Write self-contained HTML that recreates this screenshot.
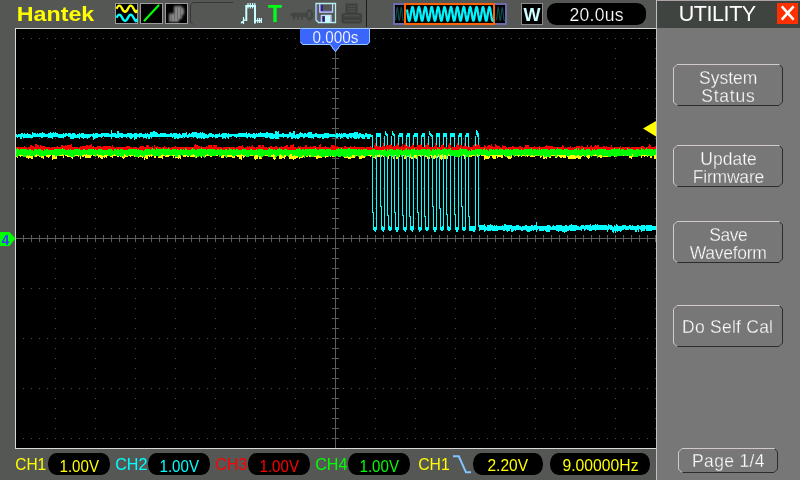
<!DOCTYPE html>
<html lang="en"><head><meta charset="utf-8"><title>Hantek UTILITY</title>
<style>
html,body{margin:0;padding:0;background:#555755;overflow:hidden}
body{width:800px;height:480px;position:relative}
svg{position:absolute;left:0;top:0;display:block;will-change:transform}
text{font-family:"Liberation Sans",sans-serif;}
.t{font-size:17.5px;fill:#fff;stroke:#777777;stroke-width:.3px;text-anchor:middle}
.c{font-size:16.6px;}
.v{font-size:16.8px}
</style></head><body>
<svg width="800" height="480" viewBox="0 0 800 480">
<g shape-rendering="crispEdges">
<rect x="15" y="28" width="642" height="421" fill="#d8d8d8"/>
<rect x="16" y="29" width="640" height="419" fill="#000"/>
<g stroke="#505050" stroke-width="1" stroke-dasharray="1 7">
<line x1="23" y1="38.5" x2="656" y2="38.5"/>
<line x1="23" y1="88.5" x2="656" y2="88.5"/>
<line x1="23" y1="138.5" x2="656" y2="138.5"/>
<line x1="23" y1="188.5" x2="656" y2="188.5"/>
<line x1="23" y1="288.5" x2="656" y2="288.5"/>
<line x1="23" y1="338.5" x2="656" y2="338.5"/>
<line x1="23" y1="388.5" x2="656" y2="388.5"/>
<line x1="23" y1="438.5" x2="656" y2="438.5"/>
</g>
<g stroke="#505050" stroke-width="1" stroke-dasharray="1 9">
<line x1="55.5" y1="38" x2="55.5" y2="439"/>
<line x1="95.5" y1="38" x2="95.5" y2="439"/>
<line x1="135.5" y1="38" x2="135.5" y2="439"/>
<line x1="175.5" y1="38" x2="175.5" y2="439"/>
<line x1="215.5" y1="38" x2="215.5" y2="439"/>
<line x1="255.5" y1="38" x2="255.5" y2="439"/>
<line x1="295.5" y1="38" x2="295.5" y2="439"/>
<line x1="375.5" y1="38" x2="375.5" y2="439"/>
<line x1="415.5" y1="38" x2="415.5" y2="439"/>
<line x1="455.5" y1="38" x2="455.5" y2="439"/>
<line x1="495.5" y1="38" x2="495.5" y2="439"/>
<line x1="535.5" y1="38" x2="535.5" y2="439"/>
<line x1="575.5" y1="38" x2="575.5" y2="439"/>
<line x1="615.5" y1="38" x2="615.5" y2="439"/>
<line x1="655.5" y1="38" x2="655.5" y2="439"/>
</g>
<g stroke="#5c5c5c" stroke-width="1">
<line x1="16" y1="238.5" x2="656" y2="238.5"/>
<line x1="335.5" y1="29" x2="335.5" y2="448"/>
</g>
<line x1="23" y1="238.5" x2="656" y2="238.5" stroke="#5c5c5c" stroke-width="7" stroke-dasharray="1 7"/>
<line x1="335.5" y1="48" x2="335.5" y2="448" stroke="#5c5c5c" stroke-width="7" stroke-dasharray="1 9"/>
<path d="M16.5 149V157M17.5 149V158M18.5 148V156M19.5 149V156M20.5 149V157M21.5 150V156M22.5 150V156M23.5 150V156M24.5 150V156M25.5 150V156M26.5 150V158M27.5 150V158M28.5 150V159M29.5 150V158M30.5 150V158M31.5 150V159M32.5 150V159M33.5 150V156M34.5 150V156M35.5 149V157M36.5 149V157M37.5 150V156M38.5 150V156M39.5 150V157M40.5 150V157M41.5 151V158M42.5 150V158M43.5 150V159M44.5 150V156M45.5 150V156M46.5 149V157M47.5 150V157M48.5 150V158M49.5 150V157M50.5 150V156M51.5 150V155M52.5 150V160M53.5 149V159M54.5 150V159M55.5 151V159M56.5 150V159M57.5 150V156M58.5 150V156M59.5 150V156M60.5 150V156M61.5 150V156M62.5 150V156M63.5 150V158M64.5 150V155M65.5 150V156M66.5 150V156M67.5 150V157M68.5 149V157M69.5 150V157M70.5 150V157M71.5 150V158M72.5 150V159M73.5 149V157M74.5 150V157M75.5 151V156M76.5 150V156M77.5 150V156M78.5 150V157M79.5 150V156M80.5 149V159M81.5 150V156M82.5 150V157M83.5 150V157M84.5 150V156M85.5 150V158M86.5 150V158M87.5 150V158M88.5 150V158M89.5 150V158M90.5 150V158M91.5 150V156M92.5 150V155M93.5 150V156M94.5 150V156M95.5 150V156M96.5 151V156M97.5 151V156M98.5 150V158M99.5 150V157M100.5 150V158M101.5 150V159M102.5 149V159M103.5 150V157M104.5 150V158M105.5 150V157M106.5 150V158M107.5 149V156M108.5 149V156M109.5 150V156M110.5 150V157M111.5 150V157M112.5 150V158M113.5 150V156M114.5 150V156M115.5 150V156M116.5 150V156M117.5 150V157M118.5 150V157M119.5 150V156M120.5 150V157M121.5 150V157M122.5 150V158M123.5 150V159M124.5 150V158M125.5 149V157M126.5 150V157M127.5 149V157M128.5 150V156M129.5 150V156M130.5 150V157M131.5 150V156M132.5 150V156M133.5 150V156M134.5 151V157M135.5 150V157M136.5 149V157M137.5 150V157M138.5 150V158M139.5 150V157M140.5 150V157M141.5 150V157M142.5 150V158M143.5 149V156M144.5 151V160M145.5 150V158M146.5 150V159M147.5 150V159M148.5 150V156M149.5 151V157M150.5 150V156M151.5 149V157M152.5 150V156M153.5 150V156M154.5 150V158M155.5 150V158M156.5 151V156M157.5 149V156M158.5 150V158M159.5 151V158M160.5 150V158M161.5 151V158M162.5 150V159M163.5 150V156M164.5 150V156M165.5 149V157M166.5 148V157M167.5 149V157M168.5 149V157M169.5 150V156M170.5 150V156M171.5 150V156M172.5 150V156M173.5 150V158M174.5 149V156M175.5 150V158M176.5 150V158M177.5 150V158M178.5 150V159M179.5 150V158M180.5 150V159M181.5 150V155M182.5 150V156M183.5 150V157M184.5 150V157M185.5 150V157M186.5 151V156M187.5 150V157M188.5 150V157M189.5 150V156M190.5 150V157M191.5 150V157M192.5 150V157M193.5 150V157M194.5 150V157M195.5 150V157M196.5 150V158M197.5 150V156M198.5 150V156M199.5 150V156M200.5 150V156M201.5 151V158M202.5 149V156M203.5 149V156M204.5 150V156M205.5 150V157M206.5 149V156M207.5 148V156M208.5 150V156M209.5 150V156M210.5 150V157M211.5 150V157M212.5 151V156M213.5 150V156M214.5 148V156M215.5 149V156M216.5 151V156M217.5 150V156M218.5 150V155M219.5 151V156M220.5 150V156M221.5 150V158M222.5 150V158M223.5 150V158M224.5 149V156M225.5 149V157M226.5 149V157M227.5 150V157M228.5 150V157M229.5 150V157M230.5 150V157M231.5 151V157M232.5 150V158M233.5 150V158M234.5 150V158M235.5 149V156M236.5 149V156M237.5 150V157M238.5 150V157M239.5 150V159M240.5 150V159M241.5 150V160M242.5 149V156M243.5 150V158M244.5 149V157M245.5 149V156M246.5 150V156M247.5 150V156M248.5 151V156M249.5 150V156M250.5 150V156M251.5 149V156M252.5 150V156M253.5 150V155M254.5 150V159M255.5 150V160M256.5 150V159M257.5 151V159M258.5 151V156M259.5 150V159M260.5 150V159M261.5 150V159M262.5 149V157M263.5 150V156M264.5 150V156M265.5 150V156M266.5 150V156M267.5 150V156M268.5 150V156M269.5 151V156M270.5 150V156M271.5 150V157M272.5 150V157M273.5 151V159M274.5 150V160M275.5 150V159M276.5 150V156M277.5 150V156M278.5 150V156M279.5 150V159M280.5 151V159M281.5 150V159M282.5 150V158M283.5 150V158M284.5 151V159M285.5 150V157M286.5 150V156M287.5 150V156M288.5 150V156M289.5 150V159M290.5 150V159M291.5 150V159M292.5 149V159M293.5 150V160M294.5 150V159M295.5 149V159M296.5 150V158M297.5 149V158M298.5 150V157M299.5 150V159M300.5 150V158M301.5 150V158M302.5 150V158M303.5 149V157M304.5 149V157M305.5 150V156M306.5 150V157M307.5 150V157M308.5 150V156M309.5 150V157M310.5 151V157M311.5 150V157M312.5 150V157M313.5 149V157M314.5 150V157M315.5 150V157M316.5 150V159M317.5 150V159M318.5 150V158M319.5 150V158M320.5 150V158M321.5 150V158M322.5 150V155M323.5 149V156M324.5 149V155M325.5 150V158M326.5 150V157M327.5 150V157M328.5 150V157M329.5 150V156M330.5 150V157M331.5 150V156M332.5 150V157M333.5 150V157M334.5 151V157M335.5 150V157M336.5 149V156M337.5 150V156M338.5 150V156M339.5 150V156M340.5 149V157M341.5 150V156M342.5 150V156M343.5 149V156M344.5 150V158M345.5 150V158M346.5 149V158M347.5 150V158M348.5 150V159M349.5 150V159M350.5 150V159M351.5 150V158M352.5 150V158M353.5 150V158M354.5 150V158M355.5 150V156M356.5 150V156M357.5 150V156M358.5 150V156M359.5 151V159M360.5 151V159M361.5 150V159M362.5 150V158M363.5 150V158M364.5 150V158M365.5 149V156M366.5 150V156M367.5 150V156M368.5 150V156M369.5 150V156M370.5 150V157M371.5 150V156M372.5 150V159M373.5 150V158M374.5 150V158M375.5 150V159M376.5 149V158M377.5 150V157M378.5 150V157M379.5 150V157M380.5 150V157M381.5 150V157M382.5 150V156M383.5 150V157M384.5 151V156M385.5 150V156M386.5 150V156M387.5 150V156M388.5 150V159M389.5 150V156M390.5 150V156M391.5 150V156M392.5 150V157M393.5 150V159M394.5 150V159M395.5 150V156M396.5 151V159M397.5 150V159M398.5 150V157M399.5 150V157M400.5 150V155M401.5 150V156M402.5 150V156M403.5 150V156M404.5 150V159M405.5 150V159M406.5 150V159M407.5 150V157M408.5 151V157M409.5 150V158M410.5 150V158M411.5 150V159M412.5 151V159M413.5 149V159M414.5 150V158M415.5 151V158M416.5 149V159M417.5 149V159M418.5 150V156M419.5 150V156M420.5 150V157M421.5 150V157M422.5 149V156M423.5 150V156M424.5 149V157M425.5 149V157M426.5 149V157M427.5 150V159M428.5 150V159M429.5 150V159M430.5 150V156M431.5 150V158M432.5 150V158M433.5 148V159M434.5 149V159M435.5 150V158M436.5 150V158M437.5 150V158M438.5 149V157M439.5 149V158M440.5 150V159M441.5 150V160M442.5 150V159M443.5 150V159M444.5 149V159M445.5 149V159M446.5 149V159M447.5 149V159M448.5 150V156M449.5 149V156M450.5 150V156M451.5 150V156M452.5 150V156M453.5 150V156M454.5 150V156M455.5 150V156M456.5 150V156M457.5 150V156M458.5 150V157M459.5 151V157M460.5 150V155M461.5 150V156M462.5 150V156M463.5 150V156M464.5 150V159M465.5 150V159M466.5 150V157M467.5 150V157M468.5 150V156M469.5 150V157M470.5 150V157M471.5 150V157M472.5 150V156M473.5 150V156M474.5 150V156M475.5 150V156M476.5 149V156M477.5 150V157M478.5 150V156M479.5 150V156M480.5 150V155M481.5 150V156M482.5 150V156M483.5 150V156M484.5 150V160M485.5 150V159M486.5 150V159M487.5 150V159M488.5 150V159M489.5 151V158M490.5 150V156M491.5 150V156M492.5 151V158M493.5 150V159M494.5 150V159M495.5 150V159M496.5 150V156M497.5 150V158M498.5 150V157M499.5 150V157M500.5 150V157M501.5 151V158M502.5 149V158M503.5 150V155M504.5 150V156M505.5 150V156M506.5 150V156M507.5 150V158M508.5 150V159M509.5 150V159M510.5 151V159M511.5 150V158M512.5 150V155M513.5 150V156M514.5 150V156M515.5 150V156M516.5 149V156M517.5 150V156M518.5 151V157M519.5 150V156M520.5 150V156M521.5 150V157M522.5 150V156M523.5 150V156M524.5 150V156M525.5 151V156M526.5 150V156M527.5 149V157M528.5 150V156M529.5 150V156M530.5 150V157M531.5 150V157M532.5 150V157M533.5 150V157M534.5 150V157M535.5 149V156M536.5 149V156M537.5 149V156M538.5 149V156M539.5 150V156M540.5 150V158M541.5 150V157M542.5 150V156M543.5 149V159M544.5 149V159M545.5 149V158M546.5 149V159M547.5 150V157M548.5 151V156M549.5 150V158M550.5 150V158M551.5 150V156M552.5 150V156M553.5 150V156M554.5 150V156M555.5 150V158M556.5 150V158M557.5 150V157M558.5 150V156M559.5 150V157M560.5 150V158M561.5 150V158M562.5 150V157M563.5 150V158M564.5 150V158M565.5 150V158M566.5 150V156M567.5 150V157M568.5 151V159M569.5 150V159M570.5 150V159M571.5 150V159M572.5 150V159M573.5 150V159M574.5 150V159M575.5 150V159M576.5 150V158M577.5 150V158M578.5 149V159M579.5 150V159M580.5 151V159M581.5 150V157M582.5 150V156M583.5 150V156M584.5 150V156M585.5 150V156M586.5 150V157M587.5 150V158M588.5 150V159M589.5 150V158M590.5 150V156M591.5 149V156M592.5 150V155M593.5 150V156M594.5 150V156M595.5 150V156M596.5 150V156M597.5 150V157M598.5 149V157M599.5 150V157M600.5 150V158M601.5 149V158M602.5 149V155M603.5 150V157M604.5 150V157M605.5 150V157M606.5 150V157M607.5 150V157M608.5 150V157M609.5 150V156M610.5 150V156M611.5 150V156M612.5 150V156M613.5 150V156M614.5 150V157M615.5 150V157M616.5 150V157M617.5 150V156M618.5 150V156M619.5 150V156M620.5 150V156M621.5 150V156M622.5 150V156M623.5 150V156M624.5 150V156M625.5 150V156M626.5 150V156M627.5 149V156M628.5 150V156M629.5 149V158M630.5 149V158M631.5 150V159M632.5 151V157M633.5 150V156M634.5 150V157M635.5 150V156M636.5 151V156M637.5 150V156M638.5 150V156M639.5 149V156M640.5 150V156M641.5 150V158M642.5 150V156M643.5 150V156M644.5 150V157M645.5 150V156M646.5 150V156M647.5 150V157M648.5 150V156M649.5 150V156M650.5 150V158M651.5 150V158M652.5 150V156M653.5 150V156M654.5 150V159M655.5 150V159" stroke="#ffff00" stroke-width="1" fill="none"/>
<path d="M16.5 134V137M17.5 135V138M18.5 134V137M19.5 134V137M20.5 134V139M21.5 133V139M22.5 133V137M23.5 134V138M24.5 133V138M25.5 134V138M26.5 134V138M27.5 133V138M28.5 134V138M29.5 134V138M30.5 134V138M31.5 135V138M32.5 132V138M33.5 133V137M34.5 133V137M35.5 133V137M36.5 134V137M37.5 133V137M38.5 134V137M39.5 133V137M40.5 133V137M41.5 133V138M42.5 132V138M43.5 133V137M44.5 133V137M45.5 134V137M46.5 134V137M47.5 134V137M48.5 133V138M49.5 133V138M50.5 132V138M51.5 133V138M52.5 133V139M53.5 132V137M54.5 133V137M55.5 132V137M56.5 133V137M57.5 133V137M58.5 134V138M59.5 134V138M60.5 134V138M61.5 134V138M62.5 134V138M63.5 133V138M64.5 134V137M65.5 133V137M66.5 133V136M67.5 134V136M68.5 133V137M69.5 133V137M70.5 133V139M71.5 134V139M72.5 133V139M73.5 133V139M74.5 133V138M75.5 134V138M76.5 135V138M77.5 134V138M78.5 134V138M79.5 133V139M80.5 134V137M81.5 133V138M82.5 133V138M83.5 133V139M84.5 134V138M85.5 134V138M86.5 134V138M87.5 134V139M88.5 134V138M89.5 134V138M90.5 134V137M91.5 134V136M92.5 134V137M93.5 133V140M94.5 134V139M95.5 133V138M96.5 133V138M97.5 133V138M98.5 134V137M99.5 134V137M100.5 134V137M101.5 133V138M102.5 133V137M103.5 133V136M104.5 133V137M105.5 133V137M106.5 133V137M107.5 133V137M108.5 133V137M109.5 134V137M110.5 134V137M111.5 130V139M112.5 133V137M113.5 133V137M114.5 133V137M115.5 133V138M116.5 134V138M117.5 131V138M118.5 131V138M119.5 133V137M120.5 133V137M121.5 133V138M122.5 133V138M123.5 134V137M124.5 134V137M125.5 134V137M126.5 134V138M127.5 133V137M128.5 133V137M129.5 133V138M130.5 133V139M131.5 133V139M132.5 134V138M133.5 134V137M134.5 133V140M135.5 133V139M136.5 133V139M137.5 134V137M138.5 134V137M139.5 133V138M140.5 133V137M141.5 133V137M142.5 134V137M143.5 134V138M144.5 134V138M145.5 133V138M146.5 134V139M147.5 133V137M148.5 134V139M149.5 134V139M150.5 132V137M151.5 132V138M152.5 132V137M153.5 131V137M154.5 131V137M155.5 132V137M156.5 132V137M157.5 133V137M158.5 134V137M159.5 134V137M160.5 133V137M161.5 133V137M162.5 133V137M163.5 133V137M164.5 133V137M165.5 133V137M166.5 134V137M167.5 134V137M168.5 134V137M169.5 134V137M170.5 133V137M171.5 133V137M172.5 134V138M173.5 133V137M174.5 133V139M175.5 133V139M176.5 133V138M177.5 134V139M178.5 134V139M179.5 133V138M180.5 134V138M181.5 135V138M182.5 133V138M183.5 133V137M184.5 133V138M185.5 133V137M186.5 132V137M187.5 135V138M188.5 134V138M189.5 133V137M190.5 134V137M191.5 133V137M192.5 132V137M193.5 132V138M194.5 132V137M195.5 132V137M196.5 132V138M197.5 133V139M198.5 133V138M199.5 133V138M200.5 132V138M201.5 133V139M202.5 132V138M203.5 133V139M204.5 133V139M205.5 134V138M206.5 134V138M207.5 135V138M208.5 134V138M209.5 133V137M210.5 133V137M211.5 133V137M212.5 134V138M213.5 134V137M214.5 135V137M215.5 134V138M216.5 134V138M217.5 134V138M218.5 134V137M219.5 133V137M220.5 135V137M221.5 134V137M222.5 133V139M223.5 133V138M224.5 133V138M225.5 133V139M226.5 133V137M227.5 134V138M228.5 133V139M229.5 134V137M230.5 134V137M231.5 134V137M232.5 134V136M233.5 134V136M234.5 134V137M235.5 134V137M236.5 134V138M237.5 134V137M238.5 133V137M239.5 133V137M240.5 133V137M241.5 133V137M242.5 133V137M243.5 133V137M244.5 133V137M245.5 133V137M246.5 132V138M247.5 134V138M248.5 133V137M249.5 133V137M250.5 134V138M251.5 134V137M252.5 134V138M253.5 133V138M254.5 133V139M255.5 134V138M256.5 133V137M257.5 134V137M258.5 133V137M259.5 133V137M260.5 132V137M261.5 133V137M262.5 133V137M263.5 133V137M264.5 133V137M265.5 133V138M266.5 132V138M267.5 132V138M268.5 133V137M269.5 133V138M270.5 133V139M271.5 133V139M272.5 133V139M273.5 134V139M274.5 134V138M275.5 131V139M276.5 131V139M277.5 132V139M278.5 131V139M279.5 134V137M280.5 134V137M281.5 134V137M282.5 133V137M283.5 133V138M284.5 134V137M285.5 134V137M286.5 134V137M287.5 134V138M288.5 134V138M289.5 132V137M290.5 132V137M291.5 133V139M292.5 133V139M293.5 131V138M294.5 131V138M295.5 135V139M296.5 134V138M297.5 134V139M298.5 134V139M299.5 133V138M300.5 132V137M301.5 133V137M302.5 133V137M303.5 134V138M304.5 133V138M305.5 133V137M306.5 134V137M307.5 133V137M308.5 132V138M309.5 132V138M310.5 132V138M311.5 132V138M312.5 134V138M313.5 134V139M314.5 134V137M315.5 133V137M316.5 133V137M317.5 134V138M318.5 134V138M319.5 134V138M320.5 134V138M321.5 134V137M322.5 134V139M323.5 134V139M324.5 133V138M325.5 133V138M326.5 133V138M327.5 133V138M328.5 133V138M329.5 134V137M330.5 134V137M331.5 134V137M332.5 134V137M333.5 134V137M334.5 134V137M335.5 135V137M336.5 133V138M337.5 133V138M338.5 134V137M339.5 133V137M340.5 134V139M341.5 133V138M342.5 134V138M343.5 133V137M344.5 133V137M345.5 133V137M346.5 134V138M347.5 134V139M348.5 134V139M349.5 133V137M350.5 133V138M351.5 133V138M352.5 133V137M353.5 133V138M354.5 132V139M355.5 132V139M356.5 132V139M357.5 132V138M358.5 134V139M359.5 133V138M360.5 133V137M361.5 134V138M362.5 134V139M363.5 134V139M364.5 135V139M365.5 133V137M366.5 133V137M367.5 134V139M368.5 134V139M369.5 134V139M370.5 134V137M371.5 135V137M372.5 135V138M372.5 135V213M373.5 212V228M373.5 227V230M374.5 227V230M375.5 227V230M376.5 227V230M374.5 229V231M375.5 229V232M376.5 136V229M376.5 133V137M377.5 133V137M378.5 133V137M379.5 133V137M380.5 133V137M380.5 135V207M381.5 206V228M381.5 227V230M382.5 226V230M383.5 227V230M384.5 227V230M382.5 229V231M383.5 229V232M384.5 136V229M384.5 136V139M385.5 131V135M386.5 133V136M387.5 134V137M387.5 135V216M388.5 215V228M388.5 226V230M389.5 226V230M390.5 227V230M391.5 227V230M389.5 229V231M390.5 229V231M391.5 136V229M391.5 136V139M392.5 131V135M393.5 133V136M394.5 134V137M394.5 135V213M395.5 212V228M395.5 227V230M396.5 227V230M397.5 227V230M398.5 227V230M396.5 229V232M397.5 229V232M398.5 136V229M398.5 135V138M399.5 133V137M400.5 133V137M401.5 133V137M402.5 133V138M402.5 135V216M403.5 215V228M403.5 226V230M404.5 227V230M405.5 227V230M406.5 226V230M404.5 229V231M405.5 229V232M406.5 136V229M406.5 135V138M407.5 133V137M408.5 133V137M409.5 133V138M409.5 135V217M410.5 216V228M410.5 227V230M411.5 226V230M412.5 226V230M413.5 227V230M411.5 229V231M412.5 229V232M413.5 136V229M413.5 135V138M414.5 133V137M415.5 133V137M416.5 133V137M417.5 133V138M417.5 135V213M418.5 212V228M418.5 227V230M419.5 227V230M420.5 227V230M421.5 227V230M419.5 229V232M420.5 229V231M421.5 136V229M421.5 135V138M422.5 133V137M423.5 133V137M424.5 133V138M424.5 135V217M425.5 216V228M425.5 227V230M426.5 227V230M427.5 227V230M428.5 227V230M426.5 229V231M427.5 229V231M428.5 136V229M428.5 136V139M429.5 131V135M430.5 133V136M431.5 134V137M432.5 135V138M432.5 135V207M433.5 206V228M433.5 226V230M434.5 227V230M435.5 227V230M436.5 227V230M434.5 229V232M435.5 229V232M436.5 136V229M436.5 133V137M437.5 133V137M438.5 133V137M439.5 133V137M439.5 135V209M440.5 208V228M440.5 226V230M441.5 227V230M442.5 226V230M443.5 227V230M441.5 229V231M442.5 229V231M443.5 136V229M443.5 133V137M444.5 133V137M445.5 133V137M446.5 133V137M446.5 135V215M447.5 214V228M447.5 227V230M448.5 226V230M449.5 227V230M450.5 226V230M448.5 229V231M449.5 229V231M450.5 136V229M450.5 133V137M451.5 133V137M452.5 133V137M453.5 133V137M454.5 133V137M454.5 135V215M455.5 214V228M455.5 227V230M456.5 227V230M457.5 227V230M458.5 226V230M456.5 229V232M457.5 229V232M458.5 136V229M458.5 135V138M459.5 133V137M460.5 133V137M461.5 133V138M461.5 135V207M462.5 206V228M462.5 227V230M463.5 227V230M464.5 227V230M465.5 226V230M463.5 229V231M464.5 229V231M465.5 136V229M465.5 135V138M466.5 133V137M467.5 133V137M468.5 133V138M468.5 135V217M469.5 216V228M469.5 227V230M470.5 226V230M471.5 227V230M472.5 227V230M473.5 226V230M474.5 227V230M475.5 227V230M470.5 229V231M471.5 229V231M472.5 229V231M473.5 229V232M474.5 229V232M469.5 226V231M470.5 226V231M471.5 226V231M472.5 226V231M473.5 226V231M474.5 226V231M475.5 136V229M476.5 130V135M477.5 131V137M478.5 133V227M479.5 225V231M480.5 225V230M481.5 225V230M482.5 225V230M483.5 225V230M484.5 224V232M485.5 226V231M486.5 227V230M487.5 225V231M488.5 225V231M489.5 225V231M490.5 224V231M491.5 225V230M492.5 225V231M493.5 226V231M494.5 225V231M495.5 226V231M496.5 225V231M497.5 226V231M498.5 226V230M499.5 226V230M500.5 226V230M501.5 226V230M502.5 225V230M503.5 226V231M504.5 224V231M505.5 224V230M506.5 225V231M507.5 225V232M508.5 225V231M509.5 225V231M510.5 225V229M511.5 225V232M512.5 226V232M513.5 226V231M514.5 226V230M515.5 226V231M516.5 225V230M517.5 225V230M518.5 225V230M519.5 226V230M520.5 226V230M521.5 227V231M522.5 226V231M523.5 226V230M524.5 226V230M525.5 225V230M526.5 225V231M527.5 226V232M528.5 226V232M529.5 226V232M530.5 226V231M531.5 225V231M532.5 225V230M533.5 226V231M534.5 225V230M535.5 225V230M536.5 222V232M537.5 226V230M538.5 226V229M539.5 226V231M540.5 226V231M541.5 226V231M542.5 226V231M543.5 226V231M544.5 226V230M545.5 226V231M546.5 226V232M547.5 225V232M548.5 225V232M549.5 225V232M550.5 226V230M551.5 227V230M552.5 226V230M553.5 225V230M554.5 226V230M555.5 226V230M556.5 225V231M557.5 225V231M558.5 225V232M559.5 225V231M560.5 225V231M561.5 225V231M562.5 226V232M563.5 226V232M564.5 226V233M565.5 225V232M566.5 225V232M567.5 226V231M568.5 226V231M569.5 225V230M570.5 225V231M571.5 224V231M572.5 225V231M573.5 225V231M574.5 225V231M575.5 225V231M576.5 225V230M577.5 226V230M578.5 226V230M579.5 227V230M580.5 226V230M581.5 225V231M582.5 225V229M583.5 225V229M584.5 226V231M585.5 225V230M586.5 225V229M587.5 225V230M588.5 225V230M589.5 225V231M590.5 224V231M591.5 226V231M592.5 225V230M593.5 225V230M594.5 225V230M595.5 224V231M596.5 225V230M597.5 224V230M598.5 225V230M599.5 225V230M600.5 225V230M601.5 225V230M602.5 225V230M603.5 225V230M604.5 225V230M605.5 225V230M606.5 225V230M607.5 226V232M608.5 224V230M609.5 225V229M610.5 225V230M611.5 225V230M612.5 226V232M613.5 227V233M614.5 225V231M615.5 226V233M616.5 224V231M617.5 225V232M618.5 226V231M619.5 226V231M620.5 226V232M621.5 226V231M622.5 225V230M623.5 225V230M624.5 225V229M625.5 225V230M626.5 226V230M627.5 226V230M628.5 226V230M629.5 225V229M630.5 225V230M631.5 226V230M632.5 225V230M633.5 226V230M634.5 226V230M635.5 226V232M636.5 226V232M637.5 225V230M638.5 225V232M639.5 226V229M640.5 226V230M641.5 225V232M642.5 225V231M643.5 225V231M644.5 225V231M645.5 226V229M646.5 225V231M647.5 225V231M648.5 225V231M649.5 225V231M650.5 225V231M651.5 225V231M652.5 226V230M653.5 226V230M654.5 226V230M655.5 226V230" stroke="#00ffff" stroke-width="1" fill="none"/>
<path d="M16.5 147V151M17.5 147V150M18.5 147V151M19.5 147V151M20.5 147V151M21.5 147V151M22.5 147V151M23.5 147V151M24.5 146V151M25.5 147V151M26.5 147V151M27.5 148V151M28.5 147V151M29.5 147V151M30.5 145V152M31.5 145V152M32.5 146V151M33.5 146V151M34.5 147V151M35.5 144V151M36.5 144V151M37.5 145V151M38.5 145V151M39.5 147V151M40.5 145V151M41.5 146V152M42.5 146V151M43.5 146V151M44.5 146V151M45.5 147V151M46.5 147V151M47.5 147V151M48.5 147V151M49.5 147V151M50.5 148V151M51.5 147V151M52.5 147V151M53.5 147V150M54.5 147V151M55.5 147V151M56.5 147V151M57.5 146V151M58.5 147V151M59.5 147V151M60.5 147V151M61.5 145V151M62.5 145V151M63.5 146V151M64.5 146V151M65.5 145V152M66.5 146V151M67.5 145V151M68.5 145V150M69.5 145V153M70.5 145V152M71.5 144V151M72.5 147V152M73.5 147V151M74.5 147V151M75.5 147V151M76.5 147V151M77.5 147V152M78.5 148V152M79.5 147V152M80.5 146V151M81.5 147V151M82.5 146V151M83.5 146V151M84.5 146V151M85.5 146V151M86.5 145V151M87.5 145V151M88.5 146V151M89.5 145V151M90.5 145V151M91.5 144V150M92.5 147V151M93.5 146V152M94.5 147V151M95.5 147V151M96.5 147V152M97.5 146V151M98.5 146V151M99.5 146V151M100.5 146V151M101.5 147V151M102.5 147V150M103.5 146V151M104.5 146V151M105.5 146V150M106.5 146V151M107.5 146V151M108.5 146V151M109.5 146V151M110.5 146V151M111.5 147V151M112.5 145V151M113.5 147V151M114.5 147V151M115.5 148V151M116.5 147V151M117.5 147V152M118.5 147V151M119.5 147V151M120.5 147V151M121.5 147V152M122.5 147V150M123.5 147V151M124.5 147V151M125.5 147V151M126.5 146V151M127.5 146V151M128.5 146V150M129.5 146V150M130.5 147V151M131.5 147V151M132.5 148V151M133.5 147V152M134.5 147V151M135.5 147V152M136.5 147V152M137.5 148V152M138.5 148V152M139.5 147V151M140.5 146V151M141.5 146V151M142.5 146V151M143.5 146V151M144.5 147V150M145.5 147V151M146.5 145V150M147.5 145V150M148.5 145V151M149.5 147V151M150.5 147V151M151.5 147V151M152.5 146V151M153.5 148V152M154.5 145V151M155.5 147V151M156.5 147V151M157.5 146V150M158.5 147V151M159.5 147V151M160.5 147V152M161.5 148V152M162.5 147V151M163.5 147V151M164.5 146V152M165.5 147V152M166.5 147V151M167.5 148V151M168.5 147V150M169.5 147V151M170.5 148V151M171.5 147V151M172.5 147V151M173.5 147V152M174.5 147V151M175.5 146V152M176.5 147V151M177.5 147V151M178.5 147V151M179.5 147V151M180.5 147V151M181.5 147V151M182.5 147V151M183.5 147V151M184.5 147V151M185.5 147V151M186.5 147V151M187.5 147V151M188.5 147V152M189.5 147V151M190.5 147V151M191.5 147V151M192.5 147V151M193.5 147V152M194.5 145V151M195.5 144V151M196.5 145V152M197.5 145V152M198.5 146V151M199.5 146V151M200.5 147V151M201.5 146V151M202.5 147V151M203.5 147V151M204.5 147V151M205.5 147V151M206.5 146V151M207.5 147V151M208.5 145V151M209.5 145V151M210.5 145V151M211.5 145V152M212.5 147V151M213.5 145V151M214.5 145V152M215.5 145V151M216.5 145V151M217.5 147V152M218.5 147V151M219.5 147V150M220.5 147V151M221.5 147V152M222.5 148V151M223.5 147V151M224.5 147V151M225.5 147V151M226.5 147V151M227.5 147V151M228.5 147V151M229.5 147V151M230.5 147V151M231.5 147V151M232.5 147V151M233.5 147V151M234.5 147V151M235.5 148V151M236.5 147V151M237.5 147V151M238.5 146V150M239.5 146V151M240.5 146V151M241.5 146V151M242.5 145V151M243.5 147V151M244.5 148V151M245.5 147V151M246.5 147V150M247.5 146V152M248.5 147V152M249.5 146V151M250.5 147V151M251.5 146V150M252.5 145V151M253.5 147V151M254.5 147V152M255.5 148V152M256.5 147V151M257.5 147V151M258.5 145V151M259.5 145V151M260.5 145V151M261.5 147V151M262.5 145V151M263.5 145V151M264.5 147V151M265.5 147V151M266.5 147V151M267.5 148V151M268.5 147V151M269.5 147V151M270.5 146V151M271.5 146V151M272.5 147V151M273.5 147V151M274.5 147V151M275.5 146V151M276.5 146V151M277.5 147V151M278.5 148V151M279.5 147V151M280.5 147V151M281.5 146V151M282.5 147V151M283.5 147V151M284.5 146V151M285.5 146V151M286.5 145V152M287.5 145V151M288.5 147V152M289.5 147V151M290.5 145V152M291.5 145V152M292.5 145V151M293.5 144V151M294.5 147V152M295.5 147V151M296.5 148V151M297.5 147V151M298.5 146V151M299.5 147V151M300.5 146V152M301.5 147V150M302.5 147V151M303.5 147V151M304.5 147V150M305.5 145V151M306.5 145V151M307.5 147V151M308.5 147V151M309.5 147V151M310.5 146V151M311.5 147V151M312.5 147V151M313.5 146V152M314.5 146V151M315.5 146V151M316.5 147V151M317.5 147V152M318.5 147V152M319.5 145V152M320.5 144V152M321.5 147V151M322.5 147V151M323.5 147V150M324.5 147V151M325.5 146V151M326.5 147V151M327.5 147V152M328.5 147V151M329.5 148V151M330.5 147V151M331.5 145V151M332.5 145V151M333.5 145V151M334.5 146V150M335.5 145V151M336.5 147V151M337.5 146V151M338.5 147V151M339.5 147V151M340.5 147V151M341.5 147V151M342.5 147V151M343.5 148V151M344.5 146V151M345.5 146V151M346.5 147V151M347.5 147V151M348.5 147V151M349.5 147V151M350.5 146V151M351.5 147V151M352.5 147V152M353.5 147V151M354.5 146V151M355.5 147V151M356.5 147V151M357.5 147V151M358.5 147V152M359.5 147V152M360.5 147V151M361.5 147V151M362.5 147V152M363.5 147V151M364.5 147V151M365.5 148V151M366.5 147V151M367.5 147V151M368.5 147V151M369.5 147V150M370.5 146V151M371.5 147V151M372.5 148V152M373.5 148V151M374.5 145V150M375.5 143V151M376.5 146V151M377.5 146V151M378.5 147V151M379.5 146V152M380.5 147V151M381.5 147V152M382.5 146V150M383.5 143V152M384.5 146V151M385.5 147V151M386.5 145V151M387.5 145V151M388.5 146V151M389.5 145V151M390.5 144V151M391.5 145V151M392.5 147V151M393.5 146V151M394.5 146V151M395.5 146V151M396.5 145V151M397.5 143V151M398.5 145V151M399.5 147V151M400.5 147V151M401.5 146V151M402.5 144V151M403.5 147V152M404.5 145V150M405.5 143V151M406.5 146V151M407.5 145V152M408.5 146V152M409.5 147V151M410.5 147V152M411.5 146V151M412.5 143V151M413.5 145V151M414.5 147V152M415.5 147V151M416.5 147V151M417.5 145V151M418.5 145V152M419.5 145V151M420.5 144V151M421.5 145V151M422.5 147V152M423.5 147V151M424.5 147V151M425.5 145V150M426.5 145V151M427.5 143V151M428.5 145V151M429.5 147V151M430.5 147V151M431.5 147V151M432.5 147V151M433.5 147V151M434.5 146V151M435.5 143V151M436.5 145V152M437.5 147V152M438.5 147V151M439.5 147V152M440.5 147V152M441.5 145V152M442.5 144V152M443.5 145V151M444.5 147V151M445.5 147V151M446.5 147V151M447.5 148V151M448.5 145V151M449.5 143V151M450.5 145V150M451.5 148V151M452.5 147V152M453.5 147V151M454.5 147V151M455.5 147V151M456.5 145V152M457.5 143V152M458.5 145V152M459.5 147V151M460.5 145V151M461.5 145V151M462.5 147V151M463.5 146V151M464.5 143V151M465.5 146V151M466.5 146V151M467.5 147V151M468.5 147V151M469.5 146V151M470.5 147V151M471.5 147V151M472.5 147V151M473.5 145V151M474.5 144V152M475.5 146V152M476.5 144V151M477.5 145V151M478.5 145V151M479.5 145V151M480.5 147V151M481.5 147V152M482.5 147V151M483.5 147V151M484.5 145V151M485.5 146V152M486.5 147V151M487.5 146V151M488.5 145V151M489.5 145V151M490.5 146V151M491.5 144V151M492.5 146V151M493.5 147V152M494.5 147V152M495.5 144V151M496.5 145V151M497.5 146V152M498.5 146V151M499.5 146V151M500.5 147V151M501.5 148V151M502.5 145V151M503.5 146V151M504.5 146V151M505.5 146V152M506.5 147V151M507.5 148V151M508.5 147V151M509.5 147V153M510.5 147V151M511.5 147V151M512.5 146V151M513.5 146V152M514.5 147V151M515.5 147V151M516.5 147V150M517.5 147V151M518.5 147V151M519.5 146V151M520.5 146V151M521.5 147V150M522.5 147V151M523.5 148V151M524.5 147V151M525.5 145V151M526.5 145V151M527.5 145V151M528.5 145V151M529.5 147V152M530.5 147V151M531.5 147V152M532.5 147V151M533.5 147V151M534.5 146V151M535.5 147V151M536.5 147V151M537.5 147V151M538.5 147V151M539.5 146V151M540.5 147V151M541.5 147V151M542.5 147V151M543.5 147V151M544.5 147V151M545.5 146V151M546.5 145V151M547.5 146V151M548.5 146V150M549.5 146V151M550.5 146V151M551.5 146V150M552.5 146V150M553.5 147V151M554.5 147V151M555.5 147V151M556.5 147V151M557.5 147V150M558.5 147V151M559.5 147V151M560.5 147V151M561.5 147V151M562.5 145V151M563.5 146V151M564.5 148V151M565.5 147V151M566.5 148V150M567.5 147V151M568.5 147V151M569.5 147V151M570.5 146V151M571.5 148V151M572.5 147V151M573.5 148V151M574.5 147V152M575.5 147V151M576.5 146V151M577.5 146V151M578.5 146V151M579.5 146V151M580.5 147V151M581.5 146V151M582.5 146V151M583.5 147V152M584.5 147V151M585.5 147V152M586.5 147V150M587.5 145V151M588.5 147V151M589.5 147V151M590.5 146V151M591.5 145V151M592.5 147V152M593.5 147V151M594.5 146V151M595.5 145V152M596.5 146V151M597.5 145V151M598.5 145V151M599.5 147V152M600.5 147V152M601.5 147V151M602.5 147V151M603.5 146V150M604.5 146V151M605.5 147V151M606.5 146V150M607.5 147V151M608.5 147V150M609.5 147V151M610.5 147V151M611.5 145V150M612.5 147V151M613.5 148V151M614.5 147V151M615.5 147V151M616.5 147V151M617.5 147V151M618.5 147V152M619.5 147V152M620.5 146V151M621.5 148V151M622.5 147V151M623.5 147V151M624.5 147V151M625.5 147V151M626.5 147V150M627.5 147V151M628.5 147V151M629.5 147V151M630.5 148V151M631.5 147V151M632.5 147V151M633.5 147V151M634.5 147V151M635.5 147V151M636.5 147V151M637.5 147V151M638.5 147V151M639.5 147V151M640.5 147V151M641.5 146V152M642.5 146V151M643.5 146V151M644.5 147V152M645.5 148V152M646.5 147V152M647.5 147V151M648.5 146V152M649.5 144V152M650.5 145V152M651.5 147V151M652.5 147V151M653.5 147V151M654.5 147V151M655.5 146V151" stroke="#ff0000" stroke-width="1" fill="none"/>
<path d="M16.5 149V156M17.5 148V157M18.5 149V156M19.5 150V155M20.5 149V155M21.5 149V155M22.5 149V155M23.5 149V157M24.5 149V157M25.5 149V157M26.5 149V156M27.5 150V155M28.5 150V156M29.5 149V155M30.5 149V156M31.5 150V156M32.5 150V156M33.5 151V156M34.5 149V157M35.5 149V155M36.5 149V154M37.5 150V155M38.5 149V155M39.5 149V156M40.5 149V157M41.5 150V156M42.5 150V156M43.5 151V156M44.5 149V156M45.5 150V156M46.5 149V155M47.5 149V155M48.5 150V155M49.5 150V155M50.5 150V155M51.5 150V155M52.5 150V155M53.5 150V155M54.5 149V155M55.5 149V157M56.5 149V156M57.5 149V156M58.5 149V156M59.5 149V155M60.5 149V155M61.5 149V155M62.5 148V154M63.5 149V155M64.5 149V155M65.5 150V155M66.5 150V155M67.5 150V155M68.5 149V156M69.5 150V156M70.5 149V156M71.5 150V157M72.5 150V157M73.5 150V157M74.5 149V157M75.5 149V155M76.5 149V155M77.5 149V155M78.5 149V155M79.5 149V156M80.5 150V156M81.5 150V156M82.5 150V155M83.5 149V155M84.5 149V154M85.5 150V155M86.5 150V154M87.5 150V155M88.5 149V155M89.5 149V155M90.5 149V155M91.5 149V155M92.5 149V155M93.5 149V155M94.5 150V155M95.5 149V157M96.5 150V156M97.5 150V154M98.5 149V155M99.5 149V155M100.5 149V155M101.5 149V155M102.5 150V156M103.5 150V156M104.5 150V155M105.5 150V155M106.5 150V155M107.5 150V155M108.5 149V156M109.5 149V156M110.5 149V156M111.5 149V156M112.5 150V155M113.5 151V155M114.5 149V154M115.5 149V155M116.5 150V156M117.5 149V156M118.5 149V156M119.5 150V156M120.5 149V156M121.5 149V157M122.5 149V156M123.5 150V157M124.5 150V154M125.5 150V155M126.5 150V156M127.5 150V156M128.5 149V156M129.5 149V155M130.5 149V155M131.5 149V155M132.5 149V155M133.5 149V156M134.5 149V155M135.5 149V157M136.5 149V157M137.5 150V157M138.5 149V157M139.5 150V156M140.5 150V155M141.5 150V156M142.5 150V156M143.5 151V157M144.5 150V157M145.5 149V155M146.5 149V155M147.5 149V155M148.5 149V155M149.5 149V155M150.5 150V155M151.5 149V154M152.5 148V155M153.5 149V156M154.5 149V156M155.5 150V156M156.5 148V156M157.5 149V156M158.5 149V157M159.5 149V156M160.5 149V156M161.5 149V155M162.5 149V154M163.5 148V155M164.5 149V155M165.5 149V156M166.5 149V155M167.5 149V155M168.5 148V155M169.5 149V155M170.5 150V156M171.5 150V156M172.5 149V155M173.5 149V155M174.5 149V155M175.5 149V157M176.5 150V157M177.5 149V157M178.5 150V155M179.5 150V155M180.5 149V156M181.5 149V155M182.5 150V156M183.5 149V155M184.5 150V155M185.5 148V155M186.5 149V155M187.5 150V156M188.5 150V156M189.5 150V156M190.5 150V156M191.5 149V155M192.5 148V155M193.5 149V154M194.5 149V155M195.5 150V158M196.5 150V156M197.5 149V157M198.5 149V157M199.5 149V156M200.5 149V157M201.5 148V156M202.5 149V156M203.5 149V157M204.5 149V158M205.5 149V155M206.5 150V155M207.5 149V154M208.5 149V155M209.5 149V156M210.5 149V156M211.5 149V156M212.5 149V156M213.5 149V156M214.5 149V156M215.5 150V156M216.5 150V155M217.5 149V155M218.5 149V155M219.5 150V157M220.5 149V156M221.5 149V156M222.5 150V155M223.5 150V155M224.5 150V155M225.5 149V157M226.5 149V158M227.5 150V155M228.5 150V155M229.5 148V155M230.5 149V155M231.5 149V155M232.5 150V156M233.5 149V157M234.5 149V156M235.5 150V156M236.5 149V155M237.5 149V155M238.5 150V155M239.5 150V155M240.5 150V155M241.5 150V154M242.5 149V155M243.5 149V155M244.5 149V156M245.5 149V155M246.5 150V157M247.5 150V157M248.5 150V157M249.5 150V156M250.5 149V155M251.5 149V155M252.5 150V155M253.5 150V156M254.5 150V156M255.5 150V155M256.5 149V155M257.5 150V155M258.5 149V157M259.5 149V156M260.5 149V156M261.5 149V158M262.5 149V157M263.5 150V156M264.5 150V156M265.5 150V155M266.5 150V155M267.5 150V155M268.5 149V157M269.5 148V157M270.5 149V157M271.5 149V155M272.5 149V155M273.5 150V154M274.5 149V155M275.5 150V158M276.5 150V157M277.5 149V156M278.5 149V156M279.5 148V155M280.5 149V154M281.5 149V155M282.5 150V156M283.5 150V157M284.5 149V155M285.5 149V155M286.5 149V156M287.5 150V156M288.5 150V157M289.5 150V155M290.5 150V154M291.5 150V154M292.5 150V156M293.5 150V156M294.5 150V155M295.5 150V156M296.5 149V156M297.5 149V156M298.5 149V157M299.5 148V157M300.5 149V157M301.5 150V157M302.5 149V156M303.5 149V155M304.5 150V158M305.5 149V156M306.5 149V156M307.5 149V156M308.5 149V156M309.5 149V155M310.5 149V155M311.5 149V157M312.5 149V157M313.5 149V157M314.5 149V156M315.5 148V156M316.5 149V156M317.5 150V155M318.5 150V155M319.5 149V156M320.5 149V156M321.5 149V157M322.5 149V157M323.5 149V157M324.5 149V157M325.5 150V156M326.5 149V156M327.5 149V156M328.5 149V157M329.5 149V156M330.5 149V156M331.5 150V156M332.5 150V156M333.5 150V156M334.5 150V157M335.5 150V157M336.5 149V156M337.5 149V156M338.5 148V157M339.5 149V157M340.5 149V157M341.5 148V156M342.5 149V156M343.5 149V157M344.5 149V157M345.5 149V157M346.5 149V157M347.5 149V156M348.5 148V157M349.5 148V157M350.5 149V156M351.5 149V157M352.5 149V155M353.5 149V155M354.5 149V155M355.5 149V157M356.5 149V155M357.5 150V156M358.5 149V157M359.5 149V156M360.5 150V156M361.5 149V155M362.5 150V155M363.5 149V156M364.5 149V156M365.5 149V157M366.5 149V156M367.5 150V156M368.5 150V155M369.5 150V155M370.5 150V155M371.5 150V155M372.5 149V157M373.5 149V157M374.5 149V157M375.5 150V155M376.5 150V155M377.5 150V155M378.5 150V155M379.5 150V154M380.5 150V155M381.5 150V155M382.5 151V155M383.5 150V156M384.5 149V157M385.5 150V156M386.5 151V157M387.5 149V157M388.5 150V156M389.5 149V155M390.5 149V156M391.5 149V155M392.5 149V156M393.5 150V157M394.5 150V155M395.5 150V155M396.5 149V157M397.5 149V157M398.5 149V157M399.5 150V155M400.5 150V155M401.5 149V157M402.5 151V155M403.5 150V155M404.5 150V157M405.5 149V155M406.5 148V156M407.5 150V156M408.5 149V156M409.5 150V155M410.5 150V154M411.5 149V157M412.5 149V157M413.5 149V156M414.5 148V155M415.5 150V155M416.5 150V155M417.5 149V157M418.5 150V155M419.5 150V155M420.5 150V155M421.5 149V155M422.5 149V155M423.5 149V156M424.5 149V155M425.5 149V155M426.5 150V156M427.5 149V156M428.5 149V157M429.5 149V157M430.5 150V155M431.5 151V155M432.5 149V156M433.5 149V156M434.5 150V155M435.5 149V155M436.5 150V156M437.5 148V156M438.5 149V154M439.5 149V156M440.5 150V155M441.5 150V155M442.5 149V154M443.5 149V155M444.5 148V155M445.5 149V155M446.5 149V156M447.5 150V156M448.5 149V154M449.5 149V155M450.5 148V155M451.5 150V156M452.5 150V156M453.5 150V156M454.5 150V156M455.5 150V157M456.5 150V157M457.5 150V157M458.5 150V158M459.5 149V156M460.5 148V156M461.5 149V156M462.5 149V156M463.5 149V154M464.5 149V155M465.5 149V155M466.5 149V157M467.5 150V157M468.5 151V157M469.5 150V155M470.5 151V156M471.5 149V155M472.5 150V155M473.5 150V155M474.5 150V155M475.5 149V156M476.5 149V156M477.5 149V154M478.5 149V155M479.5 149V155M480.5 149V155M481.5 149V155M482.5 150V155M483.5 149V155M484.5 148V155M485.5 150V155M486.5 149V156M487.5 150V156M488.5 151V157M489.5 149V156M490.5 149V155M491.5 149V155M492.5 150V155M493.5 149V155M494.5 150V155M495.5 149V155M496.5 149V155M497.5 149V155M498.5 150V155M499.5 149V155M500.5 149V155M501.5 149V155M502.5 149V155M503.5 150V155M504.5 150V155M505.5 149V157M506.5 149V157M507.5 149V156M508.5 149V156M509.5 150V156M510.5 149V157M511.5 150V155M512.5 150V155M513.5 149V156M514.5 149V157M515.5 149V155M516.5 149V156M517.5 149V155M518.5 149V155M519.5 150V155M520.5 150V156M521.5 149V156M522.5 150V155M523.5 150V155M524.5 149V155M525.5 149V157M526.5 149V155M527.5 149V155M528.5 149V155M529.5 149V156M530.5 149V156M531.5 148V155M532.5 150V155M533.5 149V156M534.5 149V156M535.5 149V155M536.5 150V155M537.5 149V156M538.5 150V155M539.5 148V156M540.5 150V156M541.5 149V156M542.5 149V156M543.5 149V155M544.5 149V157M545.5 149V157M546.5 149V156M547.5 149V157M548.5 150V157M549.5 150V157M550.5 149V156M551.5 149V155M552.5 149V155M553.5 149V155M554.5 149V155M555.5 150V157M556.5 149V157M557.5 148V155M558.5 149V155M559.5 149V155M560.5 149V155M561.5 149V155M562.5 150V155M563.5 150V155M564.5 149V155M565.5 149V155M566.5 149V156M567.5 149V156M568.5 150V156M569.5 150V156M570.5 150V155M571.5 150V155M572.5 150V155M573.5 150V155M574.5 149V155M575.5 149V156M576.5 148V156M577.5 150V155M578.5 148V155M579.5 150V156M580.5 150V156M581.5 149V156M582.5 149V155M583.5 148V155M584.5 150V157M585.5 150V156M586.5 149V156M587.5 149V155M588.5 149V155M589.5 149V155M590.5 150V156M591.5 151V157M592.5 149V156M593.5 150V155M594.5 149V155M595.5 150V154M596.5 150V155M597.5 149V158M598.5 149V156M599.5 149V155M600.5 149V155M601.5 149V155M602.5 149V157M603.5 149V156M604.5 149V156M605.5 149V156M606.5 150V156M607.5 150V156M608.5 150V157M609.5 150V157M610.5 150V157M611.5 149V156M612.5 149V156M613.5 149V156M614.5 148V156M615.5 149V157M616.5 149V157M617.5 149V156M618.5 149V156M619.5 148V156M620.5 150V156M621.5 149V156M622.5 149V156M623.5 149V155M624.5 150V156M625.5 150V156M626.5 150V156M627.5 148V155M628.5 149V156M629.5 149V156M630.5 149V156M631.5 149V156M632.5 149V154M633.5 150V157M634.5 150V157M635.5 150V157M636.5 149V157M637.5 149V157M638.5 149V156M639.5 150V156M640.5 150V156M641.5 148V155M642.5 149V155M643.5 149V155M644.5 150V155M645.5 149V155M646.5 148V155M647.5 149V156M648.5 149V155M649.5 149V156M650.5 149V156M651.5 149V156M652.5 149V156M653.5 150V156M654.5 149V155M655.5 149V155" stroke="#00ff00" stroke-width="1" fill="none"/>
</g>
<path d="M300 28H370V42L367.5 45H341L335.5 52.5L330 45H302.5L300 42Z" fill="#3a66fc"/>
<path d="M300.5 28.5H369.5V42L367.2 44.5H340.7L335.5 51.6L330.3 44.5H302.8L300.5 42" fill="none" stroke="#9cccff" stroke-width="1"/>
<text x="335.5" y="43" font-size="16.5" fill="#fff" stroke="#3a66fc" stroke-width=".2" text-anchor="middle" textLength="46" lengthAdjust="spacingAndGlyphs">0.000s</text>
<path d="M0 232H9.5L15.5 238.5L9.5 246H0Z" fill="#00ff00"/>
<text x="1.500" y="244.500" font-size="14" font-weight="bold" fill="#3838ff">4</text>
<path d="M643 128.5L656 121V136.5Z" fill="#ffff00"/>
<text x="16.800" y="21.400" font-size="19.900" font-weight="bold" fill="#ffff00" textLength="77.500" lengthAdjust="spacingAndGlyphs">Hantek</text>
<g shape-rendering="crispEdges"><rect x="115.5" y="3.5" width="22" height="20" fill="#000" stroke="#9c9c9c"/>
<rect x="140.5" y="3.5" width="22" height="20" fill="#000" stroke="#9c9c9c"/>
<rect x="165.5" y="3.5" width="22" height="20" fill="#000" stroke="#9c9c9c"/></g>
<path d="M116.500 8.700Q119.300 2.500 122.200 8.700T127.900 8.700T133.600 8.700T136.400 9.700" fill="none" stroke="#ffff00" stroke-width="2.400"/>
<path d="M116.500 17.800Q119.300 11.600 122.200 17.800T127.900 17.800T133.600 17.800T136.400 18.800" fill="none" stroke="#00ffff" stroke-width="2.400"/>
<path d="M144.500 20.500L158.500 5.500" stroke="#00ff00" stroke-width="2.2" stroke-linecap="round"/>
<defs><filter id="bl" x="-20%" y="-20%" width="140%" height="140%"><feGaussianBlur stdDeviation="1.1"/></filter></defs>
<g fill="#a0a0a0" opacity=".85" filter="url(#bl)"><rect x="169" y="13.500" width="10" height="8.500"/><rect x="174" y="6" width="8" height="13"/><rect x="179" y="8" width="5" height="7"/></g>
<path d="M171.500 14V21M174.500 9V20M177.500 6V19M180.500 7V17" stroke="#555" stroke-width="1" opacity=".6" fill="none"/>
<path d="M193 24.500L190.500 22V5L193 2.500H233" fill="none" stroke="#3a343a" stroke-width="1"/>
<path d="M246.300 21V6H255V23.500" fill="none" stroke="#c8ffff" stroke-width="2"/>
<path d="M248 3V8.500M250.300 3V8.500M252.600 3V8.500M254.800 3V6M243.500 17V24M241.300 22.500L245.500 19.500M241.500 21.500V23.500M257.700 18V23M259.600 18V23M261.400 18V23M255 20.700H261.500" fill="none" stroke="#c8ffff" stroke-width="1.200"/>
<text x="268" y="22" font-size="24.5" font-weight="bold" fill="#00ff18" textLength="14" lengthAdjust="spacingAndGlyphs">T</text>
<g fill="#434543"><path d="M290 14.500L292.500 12.700H307V17H292.500Z"/><rect x="293" y="16" width="2" height="3.500"/><rect x="297" y="16" width="2" height="4"/><rect x="301" y="16" width="2" height="3.500"/><ellipse cx="309.500" cy="14.800" rx="3.700" ry="5.900"/></g><rect x="308.200" y="11.500" width="2.300" height="6" rx="1" fill="#555755"/>
<path d="M316 3.500H335.500V22.500H318.500L316 20Z" fill="none" stroke="#b4f0ea" stroke-width="1.300"/>
<path d="M334.300 21.300H319L317.300 19.500V4.500" fill="none" stroke="#6a5ce0" stroke-width="1" opacity=".8"/>
<path d="M319.800 4V12H332.600V4" fill="none" stroke="#c4d4ff" stroke-width="1.300"/>
<path d="M321 4V11H331.500" fill="none" stroke="#6a5ce0" stroke-width="1" opacity=".8"/>
<rect x="321.300" y="5" width="1.400" height="6" fill="#1a10a0"/>
<path d="M321.300 22V15.300H331V22" fill="none" stroke="#c4d4ff" stroke-width="1.200"/>
<rect x="325" y="15.500" width="5.500" height="7" fill="#c8f8ff"/><rect x="323" y="16.500" width="1.500" height="5" fill="#1a10a0"/>
<g fill="#3f413f"><rect x="345.500" y="3.500" width="12" height="10"/><rect x="341.500" y="13" width="20.500" height="10.500" rx="2.500"/></g>
<g fill="#4d4f4d"><rect x="347.500" y="5.500" width="8" height="1.500"/><rect x="347.500" y="8" width="8" height="1.500"/><rect x="347.500" y="10.500" width="8" height="1.500"/><rect x="344" y="15" width="15.500" height="1.500"/><rect x="344" y="20" width="15.500" height="1.500"/></g>
<rect x="366" y="0" width="1" height="27" fill="#1c1c1c"/>
<g shape-rendering="crispEdges"><rect x="394" y="4" width="112" height="20" fill="#000" stroke="#6c6cac" stroke-width="2"/>
<rect x="405" y="4" width="89" height="20" fill="#000" stroke="#ff6408" stroke-width="2"/></g>
<path d="M407.0 9.6L407.3 11.1L407.5 12.7L407.8 14.3L408.0 16.0L408.3 17.5L408.5 18.8L408.8 19.8L409.0 20.5L409.3 20.7L409.5 20.5L409.8 19.9L410.0 19.0L410.3 17.7L410.5 16.2L410.8 14.6L411.0 12.9L411.3 11.3L411.6 9.8L411.8 8.6L412.1 7.7L412.3 7.2L412.6 7.1L412.8 7.4L413.1 8.1L413.3 9.2L413.6 10.5L413.8 12.1L414.1 13.8L414.3 15.4L414.6 17.0L414.8 18.4L415.1 19.5L415.3 20.3L415.6 20.7L415.9 20.6L416.1 20.2L416.4 19.4L416.6 18.2L416.9 16.8L417.1 15.2L417.4 13.5L417.6 11.8L417.9 10.3L418.1 9.0L418.4 8.0L418.6 7.3L418.9 7.1L419.1 7.3L419.4 7.9L419.6 8.8L419.9 10.1L420.2 11.6L420.4 13.2L420.7 14.9L420.9 16.5L421.2 18.0L421.4 19.2L421.7 20.1L421.9 20.6L422.2 20.7L422.4 20.4L422.7 19.7L422.9 18.6L423.2 17.3L423.4 15.7L423.7 14.1L423.9 12.4L424.2 10.8L424.5 9.4L424.7 8.3L425.0 7.5L425.2 7.1L425.5 7.2L425.7 7.6L426.0 8.4L426.2 9.6L426.5 11.0L426.7 12.6L427.0 14.3L427.2 16.0L427.5 17.5L427.7 18.8L428.0 19.8L428.2 20.4L428.5 20.7L428.8 20.5L429.0 20.0L429.3 19.0L429.5 17.8L429.8 16.3L430.0 14.6L430.3 12.9L430.5 11.3L430.8 9.9L431.0 8.6L431.3 7.7L431.5 7.2L431.8 7.1L432.0 7.4L432.3 8.1L432.5 9.2L432.8 10.5L433.1 12.1L433.3 13.7L433.6 15.4L433.8 17.0L434.1 18.4L434.3 19.5L434.6 20.3L434.8 20.7L435.1 20.6L435.3 20.2L435.6 19.4L435.8 18.2L436.1 16.8L436.3 15.2L436.6 13.5L436.8 11.9L437.1 10.3L437.4 9.0L437.6 8.0L437.9 7.4L438.1 7.1L438.4 7.3L438.6 7.8L438.9 8.8L439.1 10.0L439.4 11.5L439.6 13.1L439.9 14.8L440.1 16.5L440.4 17.9L440.6 19.1L440.9 20.0L441.1 20.6L441.4 20.7L441.7 20.4L441.9 19.7L442.2 18.6L442.4 17.3L442.7 15.8L442.9 14.1L443.2 12.4L443.4 10.8L443.7 9.4L443.9 8.3L444.2 7.5L444.4 7.1L444.7 7.2L444.9 7.6L445.2 8.4L445.4 9.6L445.7 11.0L446.0 12.6L446.2 14.3L446.5 15.9L446.7 17.4L447.0 18.8L447.2 19.8L447.5 20.4L447.7 20.7L448.0 20.5L448.2 20.0L448.5 19.0L448.7 17.8L449.0 16.3L449.2 14.7L449.5 13.0L449.7 11.4L450.0 9.9L450.3 8.7L450.5 7.8L450.8 7.2L451.0 7.1L451.3 7.4L451.5 8.1L451.8 9.1L452.0 10.5L452.3 12.0L452.5 13.7L452.8 15.4L453.0 16.9L453.3 18.3L453.5 19.5L453.8 20.3L454.0 20.7L454.3 20.6L454.6 20.2L454.8 19.4L455.1 18.3L455.3 16.8L455.6 15.2L455.8 13.6L456.1 11.9L456.3 10.4L456.6 9.1L456.8 8.0L457.1 7.4L457.3 7.1L457.6 7.3L457.8 7.8L458.1 8.7L458.3 10.0L458.6 11.5L458.9 13.1L459.1 14.8L459.4 16.4L459.6 17.9L459.9 19.1L460.1 20.0L460.4 20.6L460.6 20.7L460.9 20.4L461.1 19.7L461.4 18.7L461.6 17.3L461.9 15.8L462.1 14.1L462.4 12.5L462.6 10.9L462.9 9.5L463.2 8.3L463.4 7.6L463.7 7.1L463.9 7.2L464.2 7.6L464.4 8.4L464.7 9.5L464.9 10.9L465.2 12.5L465.4 14.2L465.7 15.9L465.9 17.4L466.2 18.7L466.4 19.8L466.7 20.4L466.9 20.7L467.2 20.5L467.5 20.0L467.7 19.1L468.0 17.8L468.2 16.3L468.5 14.7L468.7 13.0L469.0 11.4L469.2 9.9L469.5 8.7L469.7 7.8L470.0 7.2L470.2 7.1L470.5 7.4L470.7 8.1L471.0 9.1L471.2 10.4L471.5 12.0L471.8 13.6L472.0 15.3L472.3 16.9L472.5 18.3L472.8 19.4L473.0 20.2L473.3 20.6L473.5 20.6L473.8 20.2L474.0 19.4L474.3 18.3L474.5 16.9L474.8 15.3L475.0 13.6L475.3 12.0L475.5 10.4L475.8 9.1L476.1 8.1L476.3 7.4L476.6 7.1L476.8 7.2L477.1 7.8L477.3 8.7L477.6 10.0L477.8 11.4L478.1 13.1L478.3 14.7L478.6 16.4L478.8 17.9L479.1 19.1L479.3 20.0L479.6 20.6L479.8 20.7L480.1 20.4L480.4 19.7L480.6 18.7L480.9 17.4L481.1 15.8L481.4 14.2L481.6 12.5L481.9 10.9L482.1 9.5L482.4 8.4L482.6 7.6L482.9 7.2L483.1 7.2L483.4 7.6L483.6 8.4L483.9 9.5L484.1 10.9L484.4 12.5L484.7 14.2L484.9 15.8L485.2 17.4L485.4 18.7L485.7 19.7L485.9 20.4L486.2 20.7L486.4 20.6L486.7 20.0L486.9 19.1L487.2 17.9L487.4 16.4L487.7 14.8L487.9 13.1L488.2 11.4L488.4 10.0L488.7 8.7L489.0 7.8L489.2 7.2L489.5 7.1L489.7 7.4L490.0 8.0L490.2 9.1L490.5 10.4L490.7 11.9L491.0 13.6L491.2 15.3L491.5 16.9L491.7 18.3L492.0 19.4L492.2 20.2L492.5 20.6L492.7 20.7L493.0 20.2" fill="none" stroke="#00f4ff" stroke-width="2.3"/>
<path d="M395.5 20.1L395.7 19.0L395.9 17.5L396.1 15.7L396.3 13.6L396.5 11.6L396.7 9.9L396.9 8.5L397.1 7.7L397.3 7.5L397.5 7.9L397.7 9.0L397.9 10.5L398.1 12.3L398.3 14.4L398.5 16.4L398.7 18.1L398.9 19.5L399.1 20.3L399.3 20.5L399.5 20.1L399.7 19.0L399.9 17.5L400.1 15.7L400.3 13.6L400.5 11.6L400.7 9.9L400.9 8.5L401.1 7.7L401.3 7.5L401.5 7.9L401.7 9.0L401.9 10.5L402.1 12.3L402.3 14.4L402.5 16.4L402.7 18.1L402.9 19.5L403.1 20.3L403.3 20.5L403.5 20.1" fill="none" stroke="#0c4c4c" stroke-width="1.2"/>
<path d="M496.5 20.1L496.7 19.0L496.9 17.5L497.1 15.7L497.3 13.6L497.5 11.6L497.7 9.9L497.9 8.5L498.1 7.7L498.3 7.5L498.5 7.9L498.7 9.0L498.9 10.5L499.1 12.3L499.3 14.4L499.5 16.4L499.7 18.1L499.9 19.5L500.1 20.3L500.3 20.5L500.5 20.1L500.7 19.0L500.9 17.5L501.1 15.7L501.3 13.6L501.5 11.6L501.7 9.9L501.9 8.5L502.1 7.7L502.3 7.5L502.5 7.9L502.7 9.0L502.9 10.5L503.1 12.3L503.3 14.4L503.5 16.4L503.7 18.1L503.9 19.5L504.1 20.3L504.3 20.5L504.5 20.1" fill="none" stroke="#0c4c4c" stroke-width="1.2"/>
<rect x="521.5" y="3.5" width="21" height="21" fill="#000" stroke="#8c8c8c" shape-rendering="crispEdges"/>
<text x="532" y="20.500" font-size="18" font-weight="bold" fill="#d0ffff" text-anchor="middle">W</text>
<rect x="547" y="3" width="99" height="22" rx="9" fill="#000"/>
<text x="596.5" y="20.500" font-size="17.5" fill="#fff" stroke="#000" stroke-width=".2" text-anchor="middle" textLength="54">20.0us</text>
<g shape-rendering="crispEdges">
<rect x="656" y="0" width="144" height="480" fill="#777777"/>
<rect x="656" y="0" width="144" height="28" fill="#404440"/>
<rect x="656" y="0" width="144" height="1" fill="#aaa4aa"/>
<rect x="656" y="0" width="1" height="480" fill="#c4bcc4"/>
<rect x="777" y="3" width="21" height="21" fill="#ff3000"/>
</g>
<path d="M781.800 6.300L793.600 19.700M793.600 6.300L781.800 19.700" stroke="#fff" stroke-width="2.500" fill="none"/>
<text x="678.700" y="21" font-size="21.500" fill="#fff" textLength="77.500">UTILITY</text>
<path d="M780.0 65.0L782.5 68.0V102.0L779.0 105.5H677.0" fill="none" stroke="#2c2c2c" stroke-width="1"/>
<path d="M677.0 105.5L673.5 102.0V68.0L677.0 64.5H779.5" fill="none" stroke="#d2c8d2" stroke-width="1"/>
<text class="t" x="728.2" y="84" textLength="58.5">System</text>
<text class="t" x="728" y="101.5" textLength="53.5">Status</text>
<path d="M780.0 146.0L782.5 149.0V183.0L779.0 186.5H677.0" fill="none" stroke="#2c2c2c" stroke-width="1"/>
<path d="M677.0 186.5L673.5 183.0V149.0L677.0 145.5H779.5" fill="none" stroke="#d2c8d2" stroke-width="1"/>
<text class="t" x="728.5" y="164.5" textLength="56.5">Update</text>
<text class="t" x="728.5" y="182.5" textLength="71.5">Firmware</text>
<path d="M780.0 222.0L782.5 225.0V259.0L779.0 262.5H677.0" fill="none" stroke="#2c2c2c" stroke-width="1"/>
<path d="M677.0 262.5L673.5 259.0V225.0L677.0 221.5H779.5" fill="none" stroke="#d2c8d2" stroke-width="1"/>
<text class="t" x="728.5" y="240.5" textLength="38.5">Save</text>
<text class="t" x="728.3" y="258.5" textLength="77">Waveform</text>
<path d="M780.0 306.0L782.5 309.0V343.0L779.0 346.5H677.0" fill="none" stroke="#2c2c2c" stroke-width="1"/>
<path d="M677.0 346.5L673.5 343.0V309.0L677.0 305.5H779.5" fill="none" stroke="#d2c8d2" stroke-width="1"/>
<text class="t" x="727.5" y="333" textLength="91">Do Self Cal</text>
<path d="M775.0 449.0L777.5 452.0V469.0L774.0 472.5H682.0" fill="none" stroke="#2c2c2c" stroke-width="1"/>
<path d="M682.0 472.5L678.5 469.0V452.0L682.0 448.5H774.5" fill="none" stroke="#d2c8d2" stroke-width="1"/>
<text class="t" x="728.3" y="467" textLength="72.5">Page 1/4</text>
<text class="c" x="15.2" y="470" fill="#ffff00" textLength="31" lengthAdjust="spacingAndGlyphs">CH1</text>
<rect x="48" y="453" width="62" height="22" rx="8.500" ry="10.500" fill="#000"/>
<text class="v" x="59.5" y="472" fill="#ffff00" textLength="39.500" lengthAdjust="spacingAndGlyphs">1.00V</text>
<text class="c" x="115.2" y="470" fill="#00ffff" textLength="32.3" lengthAdjust="spacingAndGlyphs">CH2</text>
<rect x="148" y="453" width="62" height="22" rx="8.500" ry="10.500" fill="#000"/>
<text class="v" x="159.5" y="472" fill="#00ffff" textLength="39.500" lengthAdjust="spacingAndGlyphs">1.00V</text>
<text class="c" x="215.2" y="470" fill="#ff0000" textLength="32.3" lengthAdjust="spacingAndGlyphs">CH3</text>
<rect x="248" y="453" width="62" height="22" rx="8.500" ry="10.500" fill="#000"/>
<text class="v" x="259.5" y="472" fill="#ff0000" textLength="39.500" lengthAdjust="spacingAndGlyphs">1.00V</text>
<text class="c" x="315.2" y="470" fill="#00ff00" textLength="32.3" lengthAdjust="spacingAndGlyphs">CH4</text>
<rect x="348" y="453" width="62" height="22" rx="8.500" ry="10.500" fill="#000"/>
<text class="v" x="359.5" y="472" fill="#00ff00" textLength="39.500" lengthAdjust="spacingAndGlyphs">1.00V</text>
<text class="c" x="418.200" y="470" fill="#ffff00" textLength="31.500" lengthAdjust="spacingAndGlyphs">CH1</text>
<path d="M453 456.300H458.800L466 472.300H471" fill="none" stroke="#84c4ff" stroke-width="2"/>
<rect x="473" y="453" width="70" height="22" rx="8.500" ry="10.500" fill="#000"/>
<text class="v" x="487.500" y="471" fill="#ffff00" textLength="40.500" lengthAdjust="spacingAndGlyphs">2.20V</text>
<rect x="550" y="453" width="100" height="22" rx="8.500" ry="10.500" fill="#000"/>
<text class="v" x="562.500" y="471" fill="#ffff00" textLength="76" lengthAdjust="spacingAndGlyphs">9.00000Hz</text>
</svg>
</body></html>
